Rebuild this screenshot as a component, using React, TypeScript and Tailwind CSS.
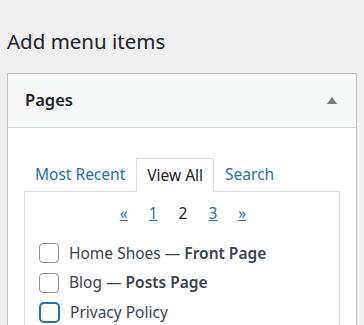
const font = { fontFamily: '"Noto Sans", "Open Sans", sans-serif' }

const items = [
    { label: 'Home Shoes', state: 'Front Page' },
    { label: 'Blog', state: 'Posts Page' },
    { label: 'Privacy Policy', state: '', focused: true },
]

const App = () => {
    return (
        <div className="w-[364px] h-[325px] overflow-hidden bg-[#f0f0f1] text-[#1d2327]" style={font}>
            <h2 className="pt-[26px] pl-[7px] text-[20.5px] leading-[30px] font-normal">Add menu items</h2>
            <div className="mt-[17px] mx-[7px] border border-[#c3c4c7] bg-white">
                <div className="h-[54px] bg-[#f6f7f7] border-b border-[#dcdcde] flex items-center justify-between pl-[17px] pr-[19px]">
                    <span className="text-[16.5px] font-semibold">Pages</span>
                    <svg width="10" height="7" viewBox="0 0 10 7">
                        <path d="M5 0 L10 7 L0 7 Z" fill="#787c82" />
                    </svg>
                </div>
                <div className="pt-[30px] px-[16px]">
                    <div className="flex items-end pl-[11px] gap-[11px] text-[15.5px]">
                        <span className="text-[#2271b1] pb-[5px]">Most Recent</span>
                        <span className="border border-b-0 border-[#dcdcde] bg-white px-[10px] pt-[5px] pb-[5px] -mb-px relative">View All</span>
                        <span className="text-[#2271b1] pb-[5px]">Search</span>
                    </div>
                    <div className="border border-[#dcdcde] h-[200px] pt-[10px]">
                        <div className="flex justify-center gap-[21px] text-[15.5px] pl-[2px]">
                            <a className="text-[#2271b1] underline">«</a>
                            <a className="text-[#2271b1] underline">1</a>
                            <span>2</span>
                            <a className="text-[#2271b1] underline">3</a>
                            <a className="text-[#2271b1] underline">»</a>
                        </div>
                        <ul className="mt-[13px] pl-[14px] flex flex-col">
                            {items.map((item) => (
                                <li key={item.label} className="h-[29.5px] flex items-center gap-[10px] text-[15.5px] text-[#3c434a]">
                                    <span className={item.focused
                                        ? 'w-[21px] h-[21px] rounded-[5px] border-2 border-[#2271b1] bg-white'
                                        : 'w-[20px] h-[20px] rounded-[4px] border border-[#8c8f94] bg-white'} />
                                    <span>
                                        {item.label}
                                        {item.state && <> — <b className="font-semibold">{item.state}</b></>}
                                    </span>
                                </li>
                            ))}
                        </ul>
                    </div>
                </div>
            </div>
        </div>
    )
}

export default App
